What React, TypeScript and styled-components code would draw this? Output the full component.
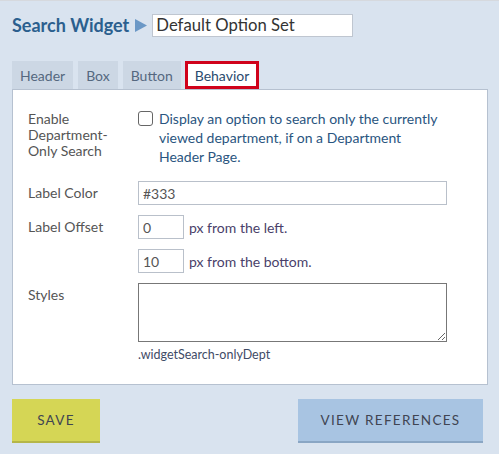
import React from 'react';
import styled, { createGlobalStyle } from 'styled-components';

const GlobalStyle = createGlobalStyle`
  html, body {
    margin: 0;
    padding: 0;
    background: #d9e3ef;
  }
  body {
    font-family: 'Lato', 'Open Sans', sans-serif;
    color: #555;
  }
`;

const Page = styled.div`
  width: 499px;
  height: 454px;
  box-sizing: border-box;
  border-top: 1px solid #d6d9de;
  padding: 12px 12px 0 12px;
`;

const TitleRow = styled.div`
  display: flex;
  align-items: center;
  height: 24px;
`;

const Title = styled.h1`
  margin: 0;
  font-size: 18px;
  font-weight: 700;
  color: #2b5f8e;
`;

const Arrow = styled.svg`
  margin: 0 5px 0 6px;
`;

const NameInput = styled.input`
  width: 201px;
  height: 23px;
  box-sizing: border-box;
  border: 1px solid #bfc6d0;
  padding: 0 3px;
  font-family: inherit;
  font-size: 16.7px;
  color: #333;
  background: #fff;
  outline: none;
`;

const Tabs = styled.div`
  display: flex;
  gap: 5px;
  margin-top: 24px;
  height: 28px;
  align-items: flex-end;
`;

const Tab = styled.div<{ $active?: boolean }>`
  height: 28px;
  box-sizing: border-box;
  display: flex;
  align-items: center;
  padding: 0 ${(p) => (p.$active ? '7px' : '8px')};
  font-size: 14px;
  background: ${(p) => (p.$active ? '#fff' : '#ccd7e4')};
  color: ${(p) => (p.$active ? '#2a4a6e' : '#55687f')};
  border: ${(p) => (p.$active ? '3px solid #d0021b' : 'none')};
  margin-left: ${(p) => (p.$active ? '-1px' : '0')};
`;

const Panel = styled.div`
  width: 476px;
  height: 296px;
  box-sizing: border-box;
  background: #fff;
  border: 1px solid #b6c1d0;
  padding: 20px 40px 0 15px;
`;

const Row = styled.div<{ $gap?: number }>`
  display: grid;
  grid-template-columns: 110px 1fr;
  margin-bottom: ${(p) => p.$gap ?? 10}px;
`;

const Label = styled.div<{ $top?: number }>`
  font-size: 14px;
  line-height: 16px;
  color: #555;
  padding-top: ${(p) => p.$top ?? 4}px;
`;

const CheckWrap = styled.label`
  display: flex;
  align-items: flex-start;
  gap: 6px;
`;

const Check = styled.span`
  flex: none;
  width: 15px;
  height: 15px;
  box-sizing: border-box;
  border: 1px solid #666;
  border-radius: 3px;
  margin-top: 1px;
`;

const CheckText = styled.span`
  font-size: 14px;
  line-height: 19px;
  color: #2a5580;
  margin-top: -1px;
`;

const TextInput = styled.input<{ $w: number }>`
  width: ${(p) => p.$w}px;
  height: 24px;
  box-sizing: border-box;
  border: 1px solid #b9c0ca;
  padding: 0 4px;
  font-family: inherit;
  font-size: 14px;
  color: #555;
  outline: none;
`;

const Inline = styled.div`
  display: flex;
  align-items: center;
  gap: 5px;
  font-size: 14px;
  color: #4a3f6a;
`;

const Area = styled.textarea`
  width: 309px;
  height: 59px;
  box-sizing: border-box;
  border: 1px solid #777;
  resize: both;
  font-family: inherit;
  display: block;
  outline: none;
`;

const Hint = styled.div`
  font-size: 12.5px;
  color: #3f4b66;
  margin-top: 5px;
`;

const Footer = styled.div`
  display: flex;
  justify-content: space-between;
  margin-top: 14px;
  padding-right: 4px;
`;

const Button = styled.button<{ $bg: string; $edge: string; $w: number }>`
  width: ${(p) => p.$w}px;
  height: 44px;
  border: none;
  border-bottom: 2px solid ${(p) => p.$edge};
  background: ${(p) => p.$bg};
  font-family: inherit;
  font-size: 13.5px;
  letter-spacing: 1.3px;
  color: #404552;
  padding: 0;
`;

export default function App() {
  return (
    <>
      <GlobalStyle />
      <Page>
        <TitleRow>
          <Title>Search Widget</Title>
          <Arrow width="12" height="13" viewBox="0 0 12 13">
            <path d="M0 0 L12 6.5 L0 13 Z" fill="#6b98c6" />
          </Arrow>
          <NameInput defaultValue="Default Option Set" />
        </TitleRow>
        <Tabs>
          <Tab>Header</Tab>
          <Tab>Box</Tab>
          <Tab>Button</Tab>
          <Tab $active>Behavior</Tab>
        </Tabs>
        <Panel>
          <Row $gap={15}>
            <Label $top={1}>
              Enable
              <br />
              Department-
              <br />
              Only Search
            </Label>
            <CheckWrap>
              <Check />
              <CheckText>
                Display an option to search only the currently viewed department, if on a Department
                Header Page.
              </CheckText>
            </CheckWrap>
          </Row>
          <Row>
            <Label>Label Color</Label>
            <TextInput $w={309} defaultValue="#333" />
          </Row>
          <Row>
            <Label>Label Offset</Label>
            <Inline>
              <TextInput $w={46} defaultValue="0" />
              px from the left.
            </Inline>
          </Row>
          <Row>
            <Label />
            <Inline>
              <TextInput $w={46} defaultValue="10" />
              px from the bottom.
            </Inline>
          </Row>
          <Row>
            <Label>Styles</Label>
            <div>
              <Area />
              <Hint>.widgetSearch-onlyDept</Hint>
            </div>
          </Row>
        </Panel>
        <Footer>
          <Button $bg="#d5d655" $edge="#b5b648" $w={88}>
            SAVE
          </Button>
          <Button $bg="#a8c4e2" $edge="#8aa6c4" $w={185}>
            VIEW REFERENCES
          </Button>
        </Footer>
      </Page>
    </>
  );
}
